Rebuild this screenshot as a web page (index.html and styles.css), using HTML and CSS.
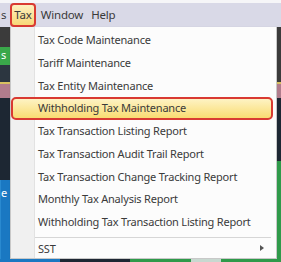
FILE: index.html
```html
<!DOCTYPE html>
<html lang="en">

<head>
    <meta charset="UTF-8">
    <title>Tax menu</title>
    <link rel="stylesheet" href="styles.css">
</head>

<body>
    <div class="menubar">
        <span class="bar-item cut">s</span>
        <span class="bar-item active">Tax</span>
        <span class="bar-item">Window</span>
        <span class="bar-item">Help</span>
    </div>
    <div class="stage">
        <div class="side left">
            <div class="band dark"></div>
            <div class="band green">s</div>
            <div class="band slate"></div>
            <div class="band mauve"></div>
            <div class="band navy"></div>
            <div class="band blue">e</div>
        </div>
        <ul class="menu">
            <li>Tax Code Maintenance</li>
            <li>Tariff Maintenance</li>
            <li>Tax Entity Maintenance</li>
            <li class="hot">Withholding Tax Maintenance</li>
            <li>Tax Transaction Listing Report</li>
            <li>Tax Transaction Audit Trail Report</li>
            <li>Tax Transaction Change Tracking Report</li>
            <li>Monthly Tax Analysis Report</li>
            <li>Withholding Tax Transaction Listing Report</li>
            <li class="sep"></li>
            <li class="sub">SST<span class="arrow"></span></li>
        </ul>
        <div class="side right">
            <div class="band dark"></div>
            <div class="band mauve"></div>
            <div class="band navy"></div>
            <div class="band green2"></div>
        </div>
    </div>
    <div class="bottom">
        <div class="seg blue"></div>
        <div class="seg navy"></div>
        <div class="seg green2"></div>
        <div class="seg light"></div>
        <div class="seg green2"></div>
    </div>
</body>

</html>
```

FILE: styles.css
```css
* {
    padding: 0;
    margin: 0;
    box-sizing: border-box;
}

body {
    width: 281px;
    height: 262px;
    overflow: hidden;
    background: #f6f6f8;
    font-family: "Noto Sans", "Open Sans", sans-serif;
    font-size: 11px;
    letter-spacing: -0.2px;
    color: #3a3a3a;
}

.menubar {
    height: 24px;
    margin-top: 3px;
    background: #d9d9e7;
    display: flex;
    align-items: center;
    font-size: 11.5px;
}

.bar-item {
    padding: 0 4px;
    line-height: 20px;
}

.bar-item.cut {
    padding: 0 4px 0 1px;
}

.bar-item.active {
    border: 2px solid #d93a32;
    border-radius: 4px;
    background: linear-gradient(#fdf0c0, #f8d878);
    padding: 0 2px;
    margin-right: 1px;
}

.stage {
    display: flex;
    height: 232px;
}

.side {
    display: flex;
    flex-direction: column;
}

.side.left {
    width: 10px;
}

.side.right {
    width: 4px;
}

.band {
    color: #fff;
    font-size: 11px;
    line-height: 16px;
}

.dark { height: 20px; background: #3b3b3b; }
.green { height: 18px; background: #3aa84a; padding-left: 1px; }
.slate { height: 19px; background: #2c3640; border-bottom: 2px solid #d8c060; }
.mauve { height: 14px; background: #b17c8c; }
.navy { height: 82px; background: #1d2733; }
.blue { flex: 1; background: #1a78c2; padding-top: 5px; border-left: 1px solid #2a8ad0; }
.side.right .dark { height: 55px; }
.side.right .mauve { height: 16px; border-top: 2px solid #d8c060; }
.side.right .navy { height: 63px; }
.green2 { flex: 1; background: #2f9a4a; }

.menu {
    list-style: none;
    width: 267px;
    background: linear-gradient(to right, #f0f0f0 23px, #e2e2e2 23px, #e2e2e2 24px, #fcfcfc 24px);
    border: 1px solid #c8c8c8;
    border-top: none;
    padding: 2px 3px 0 0;
    box-shadow: 1px 1px 2px rgba(0, 0, 0, 0.25);
}

.menu li {
    height: 22.75px;
    line-height: 22.75px;
    padding-left: 27px;
    white-space: nowrap;
}

.menu .hot {
    border: 2px solid #d93a32;
    border-radius: 5px;
    background: linear-gradient(#fef3c4, #f9dc72);
    padding-left: 25px;
    line-height: 18.75px;
}

.menu .sep {
    height: 4px;
    margin-left: 24px;
    margin-right: 2px;
    border-bottom: 1px solid #d6d6d6;
}

.menu .sub {
    height: 21px;
    line-height: 21px;
    display: flex;
    align-items: center;
    justify-content: space-between;
    padding-right: 9px;
}

.arrow {
    width: 0;
    height: 0;
    border-top: 3px solid transparent;
    border-bottom: 3px solid transparent;
    border-left: 4px solid #555;
}

.bottom {
    display: flex;
    height: 3px;
}

.seg { height: 3px; }
.bottom .blue { width: 40px; height: 3px; padding: 0; border: none; }
.bottom .navy { width: 70px; height: 3px; }
.bottom .green2 { flex: 1; }
.bottom .light { width: 30px; background: #c8d8d0; }
```
